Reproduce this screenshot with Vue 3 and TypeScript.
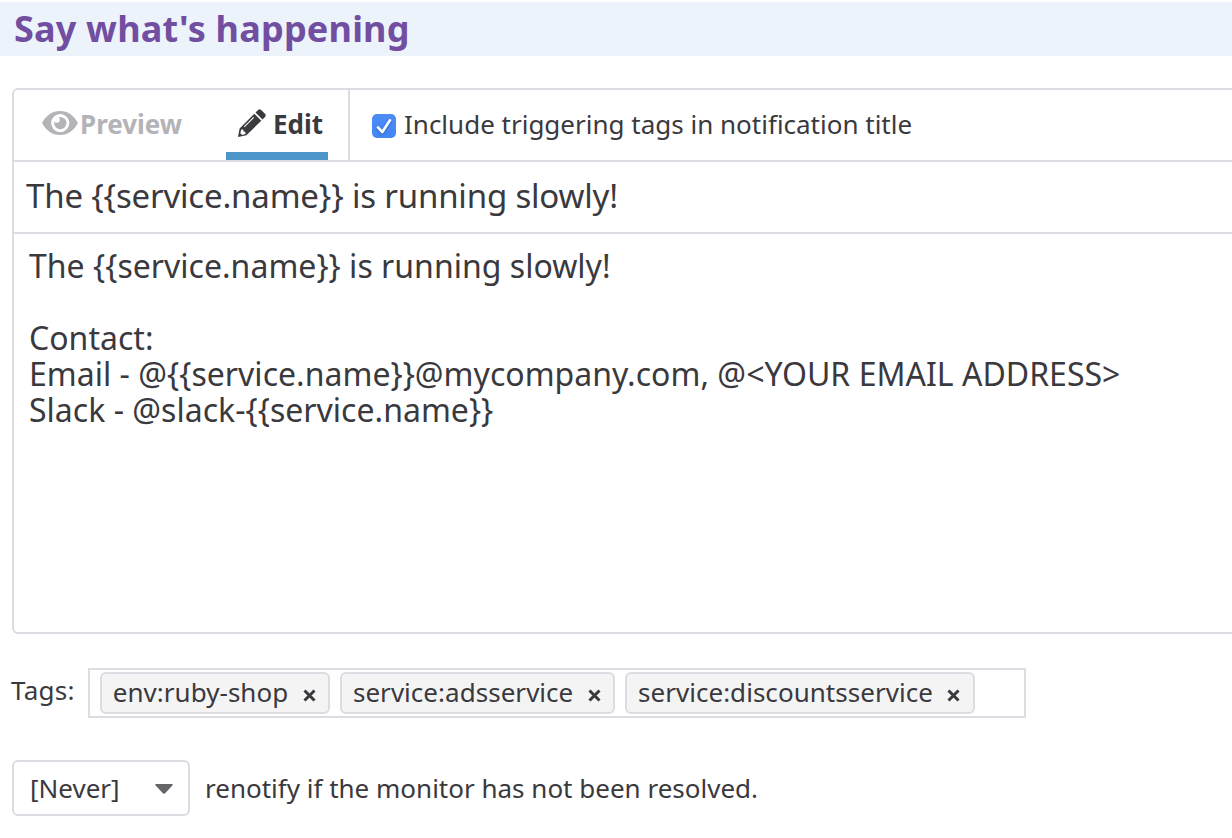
<script setup lang="ts">
import { ref } from 'vue'

const subject = ref('The {{service.name}} is running slowly!')
const message = ref(
  [
    'The {{service.name}} is running slowly!',
    '',
    'Contact:',
    'Email - @{{service.name}}@mycompany.com, @<YOUR EMAIL ADDRESS>',
    'Slack - @slack-{{service.name}}',
  ].join('\n'),
)
const tags = ref<string[]>(['env:ruby-shop', 'service:adsservice', 'service:discountsservice'])
const includeTags = ref(true)

function removeTag(tag: string): void {
  tags.value = tags.value.filter((t) => t !== tag)
}
</script>

<template>
  <main class="page">
    <h2 class="heading"><span>Say what's happening</span></h2>

    <section class="editor">
      <div class="toolbar">
        <div class="tabs">
          <div class="tab preview">
            <svg class="eye" viewBox="0 0 36 25" width="36" height="25">
              <path
                fill-rule="evenodd"
                d="M0 12.1C3.8 4.800 10.300 .1 18 .1S32.200 4.800 36 12.100C32.200 19.400 25.700 24.100 18 24.100S3.800 19.400 0 12.100ZM18.200 3a9.100 9.100 0 1 0 0 18.200a9.100 9.100 0 1 0 0-18.200Z"
              />
              <circle cx="18.300" cy="12.100" r="6.200" />
              <circle class="glint" cx="14.800" cy="8.800" r="3" />
            </svg>
            <span>Preview</span>
          </div>
          <div class="tab edit">
            <svg class="pencil" viewBox="0 0 28 28" width="28" height="28">
              <path
                fill-rule="evenodd"
                d="M16.300 4.700 23.300 11.700 8.400 26.300 0 28 1.600 19.400ZM3.300 20.400 2.300 24.200 4.100 25.900 7.500 25 7.300 22.700 5.500 22.400 5.200 20.600ZM15.300 8 5.900 17.600 6.600 18.300 16.100 8.800Z"
              />
              <path d="M17.500 3.500 20.100.9Q21.600-.5 23.100.9L27 4.800Q28.400 6.300 27 7.900L24.500 10.500Z" />
            </svg>
            <span>Edit</span>
          </div>
        </div>
        <label class="include">
          <input v-model="includeTags" class="native" type="checkbox" />
          <span class="check">
            <svg v-if="includeTags" viewBox="0 0 24 24" width="24" height="24">
              <path d="M6 13.400 10.300 18 18 6.300" />
            </svg>
          </span>
          <span class="include-text">Include triggering tags in notification title</span>
        </label>
      </div>
      <div class="subject">{{ subject }}</div>
      <div class="message">{{ message }}</div>
    </section>

    <section class="tags">
      <span class="tags-label">Tags:</span>
      <div class="tag-box">
        <span v-for="tag in tags" :key="tag" class="tag">
          <span>{{ tag }}</span>
          <svg class="remove" viewBox="0 0 13 13" width="13" height="13" @click="removeTag(tag)">
            <path d="M1.500 1.500 11.500 11.500M11.500 1.500 1.500 11.500" />
          </svg>
        </span>
      </div>
    </section>

    <section class="renotify">
      <div class="select">
        <span>[Never]</span>
        <svg viewBox="0 0 18 10" width="18" height="10">
          <path d="M1 0H17Q18.400.4 17.400 1.600L10.400 9Q9 10.400 7.600 9L.6 1.600Q-.4.4 1 0Z" />
        </svg>
      </div>
      <span>renotify if the monitor has not been resolved.</span>
    </section>
  </main>
</template>

<style>
body {
  margin: 0;
  background: #fff;
}
</style>

<style scoped>
.page {
  box-sizing: border-box;
  width: 1232px;
  height: 838px;
  padding-top: 2px;
  overflow: hidden;
  color: #3a393d;
  font-family: 'Noto Sans', 'Open Sans', sans-serif;
  font-size: 26px;
}
.heading {
  margin: 0;
  height: 54px;
  padding-left: 14px;
  background: #ecf3fb;
  color: #724ea1;
  font-size: 36px;
  font-weight: 700;
  letter-spacing: 0.2px;
  line-height: 54px;
  white-space: nowrap;
}
.editor {
  box-sizing: border-box;
  height: 546px;
  margin: 32px -10px 0 12px;
  border: 2px solid #dddce3;
  border-radius: 6px;
}
.toolbar {
  display: flex;
  height: 70px;
  border-bottom: 2px solid #dddce3;
}
.tabs {
  box-sizing: border-box;
  display: flex;
  justify-content: space-between;
  width: 336px;
  padding: 0 20px 0 28px;
  border-right: 2px solid #dddce3;
  font-weight: 700;
  line-height: 68px;
}
.tab {
  display: flex;
}
.preview {
  color: #b4b3b8;
}
.eye {
  margin: 21px 2px 0 0;
  fill: currentColor;
}
.glint {
  fill: #fff;
}
.edit {
  box-sizing: border-box;
  width: 102px;
  padding-left: 12px;
  background: linear-gradient(#4c96c9, #4c96c9) bottom / 100% 8px no-repeat;
}
.pencil {
  flex: none;
  margin: 19px 7px 0 0;
  fill: currentColor;
}
.include {
  display: flex;
  padding-left: 22px;
  line-height: 68px;
  white-space: nowrap;
}
.native {
  display: none;
}
.check {
  width: 24px;
  height: 24px;
  margin: 24px 8px 0 0;
  border-radius: 5px;
  background: linear-gradient(#4d8cf6, #4385f4);
}
.check svg {
  display: block;
  fill: none;
  stroke: #fff;
  stroke-width: 2.6;
  stroke-linecap: round;
  stroke-linejoin: round;
  filter: drop-shadow(0 1px 1px #2461c4);
}
.subject {
  box-sizing: border-box;
  height: 72px;
  padding-left: 12px;
  border-bottom: 2px solid #dddce3;
  font-size: 33px;
  letter-spacing: -0.18px;
  line-height: 68px;
  white-space: nowrap;
}
.message {
  padding: 14px 15px 0;
  font-size: 32px;
  letter-spacing: 0.02px;
  line-height: 36px;
  white-space: pre;
}
.tags {
  display: flex;
  margin: 34px 0 0 11px;
}
.tags-label {
  width: 77px;
  letter-spacing: 0.3px;
  line-height: 44px;
}
.tag-box {
  box-sizing: border-box;
  display: flex;
  gap: 10px;
  width: 938px;
  height: 50px;
  padding: 2px 10px;
  border: 2px solid #dddce3;
}
.tag {
  box-sizing: border-box;
  display: flex;
  height: 42px;
  padding: 0 12.6px 0 10.8px;
  border: 2px solid #dddce3;
  border-radius: 6px;
  background: #f4f4f5;
  letter-spacing: 0.03px;
  line-height: 36px;
}
.remove {
  flex: none;
  margin: 15px 0 0 14.300px;
  fill: none;
  stroke: #3a393d;
  stroke-width: 3;
}
.renotify {
  display: flex;
  gap: 15px;
  margin: 42px 0 0 12px;
  line-height: 56px;
}
.select {
  box-sizing: border-box;
  display: flex;
  align-items: center;
  justify-content: space-between;
  width: 178px;
  height: 56px;
  padding: 0 15px 0 16px;
  border: 2px solid #dddce3;
  border-radius: 6px;
}
.select svg {
  fill: #666569;
  margin-top: 2px;
}
</style>
